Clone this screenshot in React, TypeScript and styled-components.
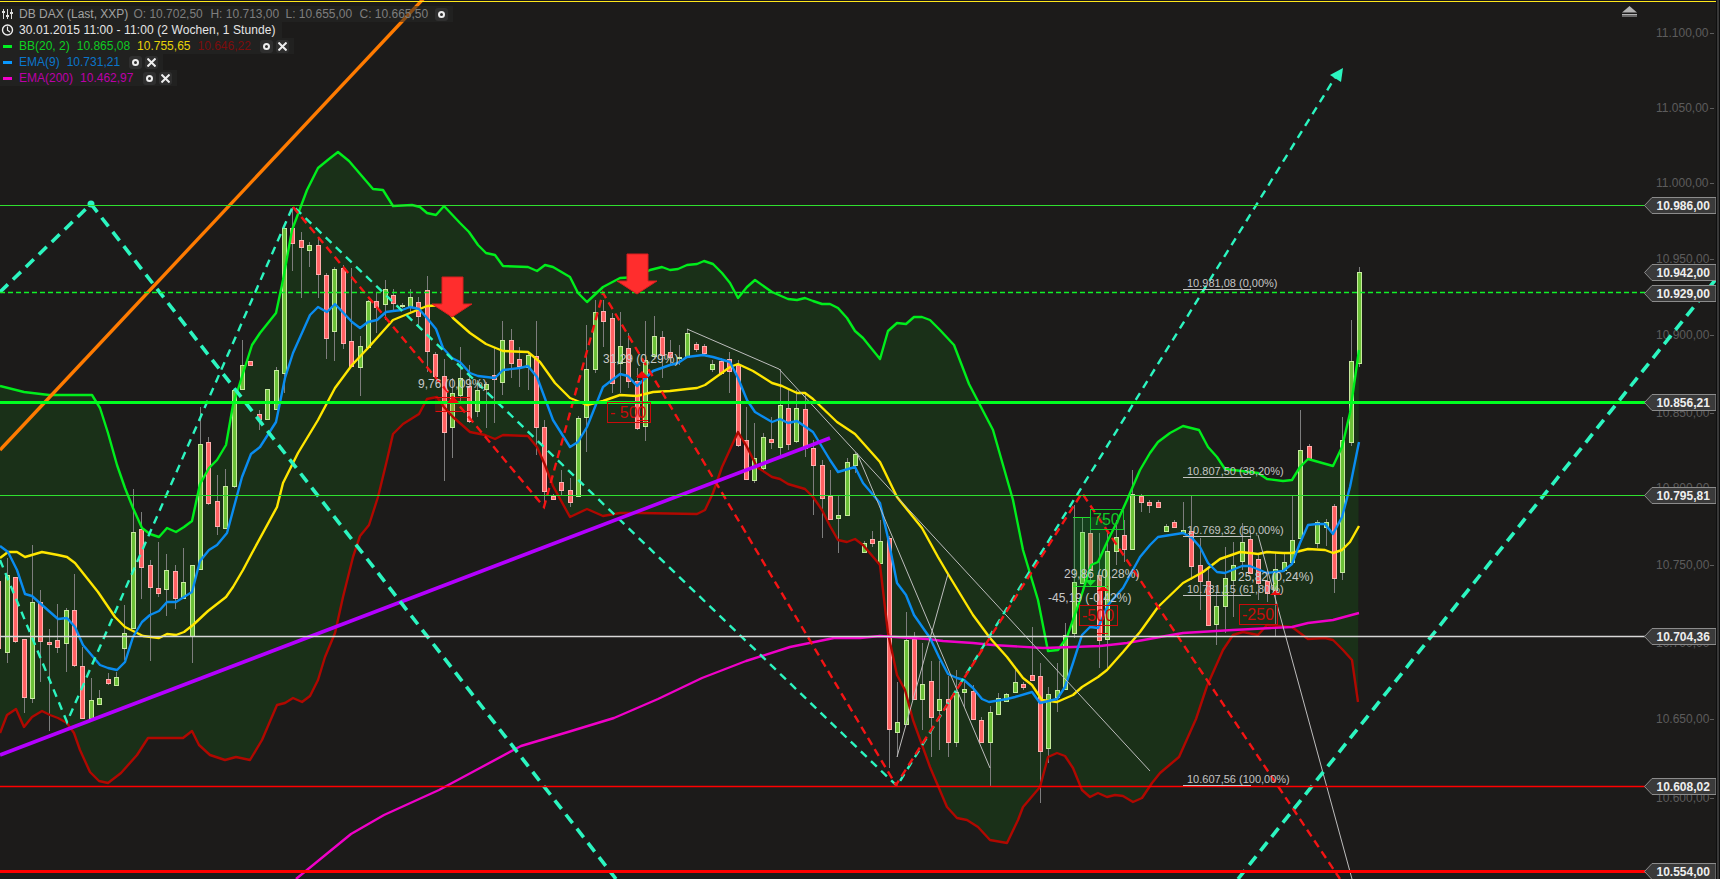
import React from 'react'
import styled, { createGlobalStyle } from 'styled-components'

type Pt = number[]
type Candle = [number, number, number, number, 'g' | 'r']

const GlobalStyle = createGlobalStyle`
  html, body {
    margin: 0;
    height: 100%;
    background: #1c1b1a;
    overflow: hidden;
    font-family: "Liberation Sans", Arial, sans-serif;
  }
`

const Page = styled.div`
  display: flex;
  width: 1720px;
  height: 879px;
  background: #1c1b1a;
`

const ChartArea = styled.div`
  position: relative;
  flex: 1;
  overflow: hidden;

  &::before {
    content: '';
    position: absolute;
    top: 1px;
    left: 0;
    right: 0;
    height: 1px;
    background: #ffe81a;
  }
`

const ScrollEdge = styled.div`
  width: 2px;
  background: #383838;
  border-left: 1px solid #0f0f0f;
  border-right: 1px solid #0f0f0f;
`

const ChartSvg = styled.svg`
  display: block;
`

const Legend = styled.div`
  position: absolute;
  top: 6px;
  left: 0;
  display: flex;
  flex-flow: column;
  align-items: flex-start;
  font-size: 12px;
  line-height: 16px;
`

const LegendRow = styled.div`
  display: flex;
  align-items: center;
  height: 16px;
  padding-right: 2px;
  background: rgba(38, 38, 38, 0.55);
`

const RowIcon = styled.svg`
  flex: none;
  width: 13px;
  height: 14px;
  margin: 0 5px 0 1px;
`

const LineKey = styled.span<{ $color: string }>`
  flex: none;
  width: 9px;
  height: 3px;
  margin: 0 7px 0 3px;
  background: ${p => p.$color};
`

const LegendText = styled.span<{ $color: string; $gap?: number; $spacing?: number }>`
  color: ${p => p.$color};
  margin-right: ${p => p.$gap ?? 7}px;
  letter-spacing: ${p => p.$spacing ?? 0}px;
  white-space: pre;
`

const ToolButton = styled.span`
  display: flex;
  flex: none;
  align-items: center;
  justify-content: center;
  width: 13px;
  height: 13px;
  margin-right: 3px;
  background: #2f2f2f;
  border-radius: 3px;
`

const Ring = styled.span`
  width: 3px;
  height: 3px;
  border: 2px solid #eee;
  border-radius: 50%;
`

const PriceTick = styled.text`
  font-size: 12px;
  fill: #5c5c5c;
`

const TagText = styled.text`
  font-size: 12px;
  font-weight: 700;
  fill: #eee;
`

const FibText = styled.text`
  font-size: 11px;
  fill: #c4c4c4;
`

const DeltaText = styled.text`
  font-size: 12px;
  fill: #c8c8c8;
`

const TradeText = styled.text<{ $color: string }>`
  font-size: 16px;
  fill: ${p => p.$color};
`

const upperBand: Pt[] = [
  [0, 386], [24, 392], [49, 395], [92, 395], [100, 408], [108, 433], [117, 465], [125, 488], [133, 508], [142, 528],
  [150, 534], [159, 537], [167, 528], [176, 532], [184, 527], [192, 521], [200, 484], [209, 468], [217, 460], [226, 445],
  [233, 405], [252, 345], [260, 333], [276, 313], [283, 280], [292, 230], [307, 190], [318, 168], [329, 159], [338, 152],
  [349, 161], [373, 189], [383, 190], [393, 206], [412, 205], [420, 207], [427, 213], [436, 215], [444, 206], [460, 223],
  [469, 232], [478, 245], [486, 253], [495, 255], [503, 266], [528, 267], [537, 271], [545, 265], [553, 267], [570, 277],
  [578, 293], [587, 302], [603, 287], [620, 278], [637, 277], [650, 270], [662, 267], [670, 270], [678, 269], [687, 265],
  [697, 264], [704, 261], [713, 264], [722, 273], [730, 283], [738, 298], [747, 287], [755, 280], [772, 292], [788, 299],
  [797, 300], [805, 298], [813, 301], [822, 304], [830, 304], [838, 308], [847, 318], [855, 331], [863, 338], [880, 359],
  [888, 331], [897, 323], [906, 324], [914, 317], [922, 317], [930, 320], [940, 330], [954, 345], [969, 384], [993, 430],
  [1013, 500], [1023, 550], [1038, 600], [1048, 651], [1058, 650], [1067, 637], [1080, 600], [1091, 565], [1098, 562],
  [1108, 540], [1118, 520], [1127, 500], [1140, 470], [1150, 453], [1158, 442], [1170, 433], [1183, 426], [1199, 430],
  [1208, 447], [1217, 457], [1225, 469], [1250, 472], [1258, 473], [1267, 479], [1283, 481], [1292, 480], [1300, 467],
  [1308, 459], [1333, 466], [1342, 447], [1350, 413], [1359, 350],
]

const lowerBand: Pt[] = [
  [0, 733], [7, 715], [16, 709], [24, 727], [32, 717], [42, 711], [50, 715], [58, 718], [67, 723], [74, 733], [80, 750],
  [90, 772], [99, 781], [108, 783], [121, 773], [137, 755], [148, 738], [183, 738], [192, 731], [199, 745], [210, 755],
  [225, 760], [236, 757], [250, 760], [262, 740], [277, 705], [285, 703], [293, 698], [302, 702], [310, 696], [318, 680],
  [325, 657], [335, 633], [343, 597], [353, 557], [360, 536], [369, 525], [378, 497], [387, 460], [393, 434], [403, 424],
  [419, 414], [427, 399], [437, 397], [444, 407], [453, 417], [470, 432], [485, 435], [495, 439], [503, 435], [528, 436],
  [537, 447], [545, 465], [553, 486], [570, 517], [587, 509], [603, 516], [620, 513], [640, 513], [697, 514], [705, 510],
  [713, 493], [722, 467], [738, 432], [747, 447], [757, 467], [772, 477], [780, 479], [788, 484], [805, 489], [813, 497],
  [822, 510], [830, 526], [838, 540], [847, 542], [855, 539], [863, 545], [880, 565], [888, 633], [897, 675], [905, 690],
  [913, 720], [930, 767], [947, 807], [957, 818], [967, 820], [978, 827], [990, 840], [1007, 843], [1018, 820], [1023, 807],
  [1040, 787], [1048, 757], [1057, 753], [1065, 756], [1073, 768], [1082, 790], [1090, 797], [1098, 793], [1107, 797],
  [1115, 795], [1123, 796], [1133, 802], [1142, 798], [1152, 783], [1160, 773], [1179, 757], [1196, 719], [1207, 686],
  [1223, 650], [1233, 635], [1243, 632], [1258, 635], [1267, 625], [1292, 627], [1308, 639], [1325, 638], [1333, 640],
  [1343, 650], [1352, 660], [1358, 702],
]

const middleBand: Pt[] = [
  [0, 558], [8, 552], [17, 552], [25, 557], [42, 552], [58, 555], [67, 557], [75, 563], [98, 592], [115, 617], [125, 627],
  [143, 636], [159, 638], [167, 634], [176, 635], [184, 632], [193, 625], [208, 611], [226, 597], [233, 587], [243, 570],
  [252, 553], [277, 507], [283, 483], [298, 453], [318, 420], [335, 388], [352, 365], [368, 348], [393, 320], [410, 313],
  [427, 306], [444, 305], [453, 318], [470, 333], [486, 344], [503, 351], [528, 352], [540, 362], [555, 383], [570, 398],
  [587, 405], [603, 401], [620, 395], [637, 396], [653, 392], [670, 391], [687, 389], [697, 388], [705, 385], [730, 367],
  [738, 364], [753, 371], [772, 383], [782, 386], [797, 393], [805, 393], [813, 399], [837, 422], [855, 434], [880, 462],
  [897, 497], [922, 528], [938, 557], [948, 574], [973, 615], [990, 638], [1007, 657], [1023, 678], [1032, 685], [1042, 700],
  [1057, 702], [1073, 695], [1082, 687], [1098, 677], [1107, 670], [1123, 652], [1140, 632], [1158, 607], [1183, 583],
  [1203, 572], [1220, 559], [1240, 552], [1250, 553], [1258, 554], [1267, 552], [1283, 553], [1292, 553], [1308, 549],
  [1325, 550], [1333, 553], [1342, 550], [1350, 542], [1359, 526],
]

const ema9: Pt[] = [
  [0, 546], [8, 552], [17, 570], [25, 594], [32, 596], [42, 605], [58, 619], [67, 618], [75, 627], [83, 645], [100, 665],
  [108, 668], [117, 670], [125, 662], [133, 637], [142, 622], [150, 615], [159, 611], [167, 602], [176, 602], [192, 592],
  [200, 561], [209, 550], [217, 545], [227, 533], [242, 477], [251, 454], [260, 447], [276, 422], [285, 378], [293, 353],
  [310, 315], [318, 307], [327, 312], [335, 304], [352, 322], [360, 328], [368, 322], [377, 320], [386, 312], [393, 311],
  [402, 310], [410, 307], [419, 309], [427, 318], [436, 329], [443, 348], [452, 358], [460, 362], [470, 373], [478, 376],
  [495, 378], [503, 370], [520, 368], [528, 366], [537, 377], [553, 420], [570, 447], [578, 442], [587, 427], [603, 387],
  [620, 374], [628, 376], [637, 386], [653, 371], [670, 365], [678, 363], [687, 357], [703, 355], [713, 357], [730, 362],
  [738, 378], [747, 400], [755, 412], [772, 422], [780, 419], [788, 423], [797, 421], [813, 432], [830, 460], [838, 472],
  [855, 467], [863, 483], [880, 503], [888, 538], [897, 583], [906, 595], [914, 615], [930, 638], [939, 657], [948, 674],
  [957, 678], [964, 680], [973, 688], [982, 699], [989, 702], [1007, 699], [1015, 697], [1032, 692], [1040, 703], [1057, 699],
  [1065, 687], [1073, 663], [1082, 635], [1090, 627], [1098, 628], [1108, 605], [1123, 588], [1140, 557], [1150, 545],
  [1158, 537], [1183, 533], [1192, 538], [1200, 547], [1208, 563], [1217, 572], [1225, 573], [1242, 566], [1250, 566],
  [1267, 573], [1283, 571], [1292, 564], [1300, 543], [1308, 525], [1317, 524], [1325, 524], [1333, 534], [1342, 517],
  [1350, 487], [1359, 442],
]

const ema200: Pt[] = [
  [296, 879], [351, 834], [384, 815], [439, 790], [480, 768], [521, 746], [568, 732], [614, 718], [658, 699], [702, 678],
  [746, 661], [790, 647], [834, 638], [860, 638], [880, 636], [927, 639], [943, 641], [973, 643], [993, 645], [1043, 648],
  [1073, 647], [1100, 646], [1127, 643], [1160, 637], [1183, 633], [1233, 630], [1292, 627], [1308, 623], [1333, 620],
  [1359, 613],
]

// index -1 sits half outside the left edge, the rest run 8.4px apart
const candles: Candle[] = [
  [575, 581, 648, 660, 'r'], [558, 575, 652, 663, 'g'], [577, 577, 641, 643, 'r'], [639, 639, 697, 713, 'r'], [545, 602, 698, 703, 'g'],
  [590, 602, 641, 682, 'r'], [629, 642, 644, 731, 'r'], [604, 640, 647, 653, 'r'], [608, 610, 643, 672, 'g'], [574, 610, 665, 667, 'r'],
  [647, 666, 718, 718, 'r'], [678, 700, 718, 718, 'g'], [690, 698, 704, 704, 'g'], [673, 679, 683, 685, 'r'], [672, 677, 685, 685, 'g'],
  [605, 633, 648, 660, 'g'], [489, 532, 628, 628, 'g'], [512, 529, 567, 599, 'r'], [560, 565, 587, 661, 'r'], [542, 588, 593, 597, 'r'],
  [554, 570, 589, 616, 'g'], [565, 571, 598, 609, 'r'], [548, 582, 598, 598, 'g'], [565, 565, 636, 663, 'g'], [407, 444, 569, 569, 'g'],
  [437, 442, 503, 505, 'r'], [475, 501, 526, 535, 'r'], [469, 486, 528, 528, 'g'], [390, 390, 486, 488, 'g'], [340, 365, 389, 390, 'g'],
  [361, 361, 365, 365, 'r'], [410, 414, 419, 430, 'r'], [389, 389, 419, 419, 'g'], [367, 370, 409, 409, 'g'], [228, 228, 373, 393, 'g'],
  [207, 228, 243, 271, 'r'], [232, 240, 247, 298, 'r'], [242, 245, 250, 267, 'g'], [237, 245, 274, 298, 'r'], [273, 275, 338, 359, 'r'],
  [267, 269, 331, 361, 'g'], [265, 268, 343, 349, 'r'], [268, 341, 366, 367, 'r'], [336, 346, 367, 396, 'g'], [300, 301, 347, 347, 'g'],
  [293, 301, 307, 333, 'r'], [280, 289, 304, 320, 'g'], [289, 295, 303, 312, 'r'], [303, 305, 306, 308, 'g'], [289, 297, 306, 313, 'g'],
  [297, 302, 316, 327, 'r'], [276, 290, 351, 372, 'r'], [352, 354, 376, 376, 'r'], [359, 376, 432, 481, 'r'], [378, 393, 427, 458, 'g'],
  [347, 378, 395, 403, 'g'], [365, 386, 421, 423, 'r'], [380, 390, 411, 417, 'g'], [382, 384, 389, 428, 'g'], [347, 375, 379, 423, 'r'],
  [321, 340, 382, 395, 'g'], [329, 340, 363, 378, 'r'], [347, 359, 366, 387, 'r'], [352, 355, 367, 390, 'g'], [321, 356, 427, 455, 'r'],
  [420, 427, 491, 503, 'r'], [494, 496, 499, 500, 'r'], [470, 482, 490, 495, 'r'], [478, 490, 502, 507, 'r'], [416, 418, 496, 496, 'g'],
  [325, 369, 417, 452, 'g'], [300, 312, 369, 373, 'g'], [300, 311, 321, 347, 'r'], [313, 318, 383, 393, 'r'], [312, 346, 363, 393, 'g'],
  [333, 348, 381, 388, 'r'], [368, 381, 428, 430, 'r'], [321, 360, 426, 441, 'g'], [316, 336, 356, 358, 'g'], [331, 337, 355, 378, 'r'],
  [340, 352, 357, 365, 'r'], [345, 357, 358, 365, 'g'], [329, 333, 357, 358, 'g'], [342, 344, 349, 352, 'r'], [344, 346, 353, 356, 'r'],
  [360, 364, 369, 372, 'g'], [358, 361, 373, 375, 'r'], [352, 359, 371, 393, 'r'], [360, 365, 445, 447, 'r'], [407, 440, 479, 480, 'r'],
  [423, 458, 480, 483, 'g'], [433, 437, 468, 470, 'g'], [417, 439, 442, 449, 'r'], [369, 405, 447, 455, 'g'], [388, 408, 444, 450, 'r'],
  [390, 408, 441, 443, 'g'], [393, 409, 448, 457, 'r'], [440, 448, 465, 515, 'r'], [460, 465, 498, 538, 'r'], [470, 496, 519, 520, 'r'],
  [495, 515, 518, 553, 'g'], [458, 462, 515, 516, 'g'], [452, 454, 465, 473, 'g'], [541, 543, 552, 552, 'g'], [531, 539, 543, 547, 'r'],
  [520, 541, 563, 563, 'g'], [536, 538, 729, 768, 'r'], [682, 722, 732, 757, 'g'], [612, 640, 724, 725, 'g'], [632, 639, 699, 700, 'r'],
  [643, 684, 699, 730, 'g'], [661, 681, 717, 757, 'r'], [661, 699, 710, 750, 'g'], [676, 699, 742, 757, 'r'], [670, 692, 742, 747, 'g'],
  [680, 689, 692, 707, 'g'], [685, 691, 719, 720, 'r'], [717, 720, 742, 743, 'r'], [706, 712, 742, 786, 'g'], [693, 698, 714, 715, 'g'],
  [693, 694, 701, 702, 'g'], [670, 682, 692, 693, 'g'], [682, 684, 687, 690, 'r'], [627, 675, 680, 681, 'r'], [663, 676, 751, 803, 'r'],
  [687, 694, 748, 763, 'g'], [663, 690, 697, 712, 'g'], [623, 635, 689, 690, 'g'], [505, 582, 633, 638, 'g'], [517, 532, 583, 584, 'g'],
  [517, 533, 570, 584, 'r'], [533, 575, 640, 668, 'r'], [533, 551, 639, 668, 'g'], [520, 537, 551, 565, 'g'], [520, 535, 549, 562, 'r'],
  [470, 494, 549, 550, 'g'], [494, 496, 502, 512, 'r'], [500, 502, 505, 513, 'r'], [500, 502, 507, 508, 'r'], [524, 526, 531, 532, 'g'],
  [520, 522, 527, 528, 'r'], [502, 530, 533, 534, 'g'], [495, 531, 566, 580, 'r'], [538, 565, 581, 610, 'r'], [567, 581, 625, 626, 'r'],
  [587, 606, 624, 645, 'g'], [547, 578, 606, 633, 'g'], [542, 565, 580, 617, 'g'], [523, 542, 561, 570, 'g'], [530, 539, 573, 574, 'r'],
  [555, 559, 583, 600, 'r'], [570, 581, 593, 602, 'r'], [553, 569, 590, 636, 'g'], [552, 562, 570, 572, 'g'], [495, 540, 562, 563, 'g'],
  [410, 450, 538, 539, 'g'], [444, 446, 459, 460, 'r'], [520, 522, 543, 548, 'g'], [519, 522, 527, 546, 'g'], [504, 506, 578, 593, 'r'],
  [417, 440, 572, 580, 'g'], [320, 361, 442, 446, 'g'], [267, 272, 363, 367, 'g'],
]

const hLines = [
  { y: 205.5, color: '#2fe02f', width: 1 },
  { y: 292.5, color: '#10f028', width: 1.5, dash: '5 3' },
  { y: 402.5, color: '#00ff20', width: 3 },
  { y: 495.5, color: '#2fe02f', width: 1 },
  { y: 636.5, color: '#d8d8d8', width: 1.4 },
  { y: 786.5, color: '#ff0000', width: 1.5 },
  { y: 871.5, color: '#ff0000', width: 3 },
]

const ticks = [
  ['11.100,00', 33], ['11.050,00', 108], ['11.000,00', 183], ['10.950,00', 259], ['10.900,00', 335],
  ['10.850,00', 413], ['10.800,00', 488], ['10.750,00', 565], ['10.700,00', 643], ['10.650,00', 719], ['10.600,00', 798],
] as const

const tags = [
  ['10.986,00', 205], ['10.942,00', 272], ['10.929,00', 293], ['10.856,21', 402],
  ['10.795,81', 495], ['10.704,36', 636], ['10.608,02', 786], ['10.554,00', 871],
] as const

const fibs = [
  ['10.981,08 (0,00%)', 289],
  ['10.807,50 (38,20%)', 477],
  ['10.769,32 (50,00%)', 536],
  ['10.731,15 (61,80%)', 595],
  ['10.607,56 (100,00%)', 785],
] as const

const deltas = [
  ['9,76 (0,09%)', 418, 388],
  ['31,29 (0,29%)', 603, 363],
  ['29,86 (0,28%)', 1064, 578],
  ['-45,19 (-0,42%)', 1048, 602],
  ['25,82 (0,24%)', 1238, 581],
] as const

const pts = (list: Pt[]) => list.map(p => p.join(',')).join(' ')

const CandleMark = ({ candle, index }: { candle: Candle; index: number }) => {
  const [high, top, bottom, low, side] = candle
  const x = Math.floor(7.3 + 8.4 * index) + 0.5
  return (
    <g>
      <line x1={x} x2={x} y1={high} y2={low} stroke="#7d7d7d" />
      <rect
        x={x - 2}
        y={top + 0.5}
        width={4}
        height={Math.max(bottom - top, 1)}
        fill={side === 'g' ? '#6cc038' : '#ff6262'}
        stroke={side === 'g' ? '#c6ea9e' : '#ffaeae'}
      />
    </g>
  )
}

const DownArrow = ({ x, y }: { x: number; y: number }) => (
  <polygon
    points={`${x - 10},${y} ${x + 11},${y} ${x + 11},${y + 27} ${x + 20},${y + 27} ${x},${y + 40} ${x - 20},${y + 27} ${x - 10},${y + 27}`}
    fill="#ff2d2d"
    stroke="#d81f1f"
  />
)

const TradeBox = ({ x, y, w, label, color }: { x: number; y: number; w: number; label: string; color: string }) => (
  <g>
    <rect x={x + 0.5} y={y + 0.5} width={w} height={20} fill="none" stroke={color} />
    <TradeText x={x + 3} y={y + 16} $color={color}>{label}</TradeText>
  </g>
)

const ChartDrawing = () => (
  <ChartSvg width={1716} height={879} viewBox="0 0 1716 879">
    <polygon points={pts([...upperBand, ...[...lowerBand].reverse()])} fill="#1a3018" />

    {ticks.map(([label, y]) => (
      <g key={label}>
        <PriceTick x={1656} y={y + 4}>{label}</PriceTick>
        <line x1={1710} x2={1714} y1={y + 0.5} y2={y + 0.5} stroke="#5c5c5c" />
      </g>
    ))}

    {candles.map((candle, i) => (
      <CandleMark key={i} candle={candle} index={i - 1} />
    ))}

    <rect x={1073} y={517} width={34} height={69} fill="rgba(0, 190, 40, 0.22)" />
    <rect x={435} y={397} width={35} height={14} fill="rgba(255, 40, 0, 0.16)" />

    <g fill="none" strokeWidth={2.4} strokeLinejoin="round">
      <polyline points={pts(upperBand)} stroke="#00ee1c" />
      <polyline points={pts(lowerBand)} stroke="#b00800" />
      <polyline points={pts(ema200)} stroke="#f000c8" />
      <polyline points={pts(middleBand)} stroke="#ffe600" />
      <polyline points={pts(ema9)} stroke="#0a8cf0" />
    </g>

    <g fill="none" stroke="#bdbdbd">
      <polyline points="687,329 779,369 1150,771" />
      <line x1={857} y1={453} x2={990} y2={768} />
      <polyline points="948,574 897,757" />
      <line x1={1258} y1={535} x2={1352} y2={879} />
    </g>

    <line x1={0} y1={450} x2={425} y2={-3} stroke="#ff7b00" strokeWidth={3.4} />

    <g fill="none" stroke="#2cf5c0" strokeWidth={2.4} strokeDasharray="8 6">
      <polyline points="0,560 67,722 293,206 897,786 1336,76" />
    </g>
    <polygon points="1343,68 1341,82 1330,75" fill="#2cf5c0" />

    <polyline
      points="293,207 544,507 603,293 896,785 1082,493 1340,879"
      fill="none"
      stroke="#f41414"
      strokeWidth={2.4}
      strokeDasharray="8 5"
    />

    <line x1={0} y1={755} x2={830} y2={438} stroke="#b400ff" strokeWidth={3.6} />

    <g fill="none" stroke="#2cf5c0" strokeWidth={3.6} strokeDasharray="11 7">
      <polyline points="0,292 91,204 616,879" />
      <line x1={1238} y1={879} x2={1716} y2={279} />
    </g>
    <circle cx={91} cy={204} r={3.5} fill="#2cf5c0" />

    {hLines.map(line => (
      <line
        key={line.y}
        x1={0}
        x2={1646}
        y1={line.y}
        y2={line.y}
        stroke={line.color}
        strokeWidth={line.width}
        strokeDasharray={line.dash}
      />
    ))}

    <DownArrow x={452} y={277} />
    <DownArrow x={637} y={254} />

    <g stroke="#e00c0c" fill="none">
      <path d="M435.5 397.5H470M435.5 411.5H470" />
      <path d="M637 377.5H648M642.5 377V420M637 420.5H648" />
      <path d="M1097 586.5H1108M1102.5 586V633M1097 633.5H1108" />
    </g>
    <g fill="#f00c0c">
      <polygon points="453,396 459,403 447,403" />
      <polygon points="642,371 648,377 636,377" />
      <polygon points="1103,586 1109,591 1097,591" />
      <polygon points="1276,590 1282,595 1270,595" />
    </g>

    <path d="M1073 517.5H1090M1073 586.5H1107" stroke="#1ee02c" fill="none" />
    <polygon points="1085,580 1096,580 1090.5,586" fill="#14e02a" />

    <TradeBox x={607} y={402} w={43} label="- 500" color="#c80c0c" />
    <TradeBox x={1090} y={509} w={33} label="750" color="#12c828" />
    <TradeBox x={1079} y={605} w={38} label="-500" color="#c80c0c" />
    <TradeBox x={1239} y={604} w={38} label="-250" color="#c80c0c" />

    {deltas.map(([label, x, y]) => (
      <DeltaText key={label} x={x} y={y}>{label}</DeltaText>
    ))}

    {fibs.map(([label, y]) => (
      <g key={label}>
        <FibText x={1187} y={y - 2}>{label}</FibText>
        <line x1={1183} x2={1251} y1={y + 0.5} y2={y + 0.5} stroke="#c4c4c4" />
      </g>
    ))}

    <g fill="#b4b4b4">
      <polygon points="1629.5,6 1637,12.5 1622,12.5" />
      <rect x={1622} y={14} width={15} height={1} />
      <rect x={1622} y={15.5} width={15} height={1} />
    </g>

    {tags.map(([label, y]) => (
      <g key={label}>
        <polygon
          points={`1716,${y - 7.5} 1652,${y - 7.5} 1644.5,${y + 0.5} 1652,${y + 8.5} 1716,${y + 8.5}`}
          fill="#3a3a3a"
          stroke="#8c8c8c"
        />
        <TagText x={1656.5} y={y + 5}>{label}</TagText>
      </g>
    ))}
  </ChartSvg>
)

const SlidersIcon = () => (
  <RowIcon viewBox="0 0 13 14">
    <path d="M2.5 2V12M6.5 2V12M10.5 2V12" stroke="#ddd" strokeWidth={1} />
    <path d="M1 5H4M5 9H8M9 6H12" stroke="#ddd" strokeWidth={2} />
  </RowIcon>
)

const ClockIcon = () => (
  <RowIcon viewBox="0 0 13 14">
    <circle cx={6.5} cy={7} r={5} fill="none" stroke="#eee" strokeWidth={1.4} />
    <path d="M6.5 3.5V7.3L9 9" fill="none" stroke="#eee" strokeWidth={1.2} />
  </RowIcon>
)

const RingButton = () => (
  <ToolButton>
    <Ring />
  </ToolButton>
)

const CloseButton = () => (
  <ToolButton>
    <svg width={9} height={9} viewBox="0 0 9 9">
      <path d="M0.5 0.5L8.5 8.5M8.5 0.5L0.5 8.5" stroke="#eee" strokeWidth={2} />
    </svg>
  </ToolButton>
)

const ChartLegend = () => (
  <Legend>
    <LegendRow>
      <SlidersIcon />
      <LegendText $color="#a2a2a2" $gap={5}>DB DAX (Last, XXP)</LegendText>
      <LegendText $color="#7e7e7e" $gap={7.7}>O: 10.702,50</LegendText>
      <LegendText $color="#7e7e7e" $gap={6.3}>H: 10.713,00</LegendText>
      <LegendText $color="#7e7e7e" $gap={7.3}>L: 10.655,00</LegendText>
      <LegendText $color="#7e7e7e" $gap={7}>C: 10.665,50</LegendText>
      <RingButton />
    </LegendRow>
    <LegendRow>
      <ClockIcon />
      <LegendText $color="#e6e6e6" $gap={4} $spacing={0.1}>30.01.2015 11:00 - 11:00 (2 Wochen, 1 Stunde)</LegendText>
    </LegendRow>
    <LegendRow>
      <LineKey $color="#00f020" />
      <LegendText $color="#0fd122">BB(20, 2)</LegendText>
      <LegendText $color="#0fc922">10.865,08</LegendText>
      <LegendText $color="#e6d208">10.755,65</LegendText>
      <LegendText $color="#7c0c0c" $gap={9}>10.646,22</LegendText>
      <RingButton />
      <CloseButton />
    </LegendRow>
    <LegendRow>
      <LineKey $color="#0a98ff" />
      <LegendText $color="#0a76cc">EMA(9)</LegendText>
      <LegendText $color="#0a76cc" $gap={9}>10.731,21</LegendText>
      <RingButton />
      <CloseButton />
    </LegendRow>
    <LegendRow>
      <LineKey $color="#f000c8" />
      <LegendText $color="#bc00a8">EMA(200)</LegendText>
      <LegendText $color="#bc00a8" $gap={10}>10.462,97</LegendText>
      <RingButton />
      <CloseButton />
    </LegendRow>
  </Legend>
)

const App = () => (
  <Page>
    <GlobalStyle />
    <ChartArea>
      <ChartDrawing />
      <ChartLegend />
    </ChartArea>
    <ScrollEdge />
  </Page>
)

App.displayName = 'App'

export default App
